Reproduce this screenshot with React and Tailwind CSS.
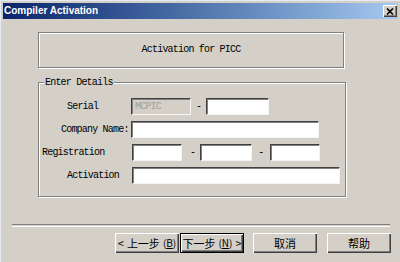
import React from "react";

const monoBase = "font-['Liberation_Mono',monospace] text-[10px] leading-[12px] tracking-[-0.8px]";
const mono = `${monoBase} text-black`;

function Field({ w, disabled, value }) {
  return (
    <div
      className={`h-[17px] ${w} border border-t-[#404040] border-l-[#404040] border-r-[#f4f4f4] border-b-[#f4f4f4] shadow-[inset_1px_1px_0_#808080] flex items-center pl-[3px] ${
        disabled ? "bg-[#d4d0c8]" : "bg-white"
      }`}
    >
      {value && <span className={`${monoBase} text-[#a19f98]`}>{value}</span>}
    </div>
  );
}

function Dash({ className }) {
  return <span className={`${mono} ${className}`}>-</span>;
}

function WinButton({ children, isDefault }) {
  return (
    <button
      type="button"
      className={`h-[20px] w-[64px] flex items-center justify-center gap-[3px] bg-[#d4d0c8] font-['Noto_Sans_CJK_SC',sans-serif] text-[11px] leading-none text-black ${
        isDefault
          ? "border border-black shadow-[inset_1px_1px_0_#fff,inset_-1px_-1px_0_#404040,inset_-2px_-2px_0_#808080]"
          : "shadow-[inset_1px_1px_0_#fff,inset_-1px_-1px_0_#404040,inset_-2px_-2px_0_#808080]"
      }`}
    >
      {children}
    </button>
  );
}

function Row({ labelW, pad, label, children }) {
  return (
    <div className="flex items-center h-[17px]">
      <div className={`${labelW} ${pad} ${mono}`}>{label}</div>
      {children}
    </div>
  );
}

export default function App() {
  return (
    <div className="w-[400px] h-[262px] overflow-hidden bg-[#d4d0c8] border-l border-t border-[#e6ebf5] pt-[2px] px-[2px]">
      {/* title bar */}
      <div className="h-[16px] flex items-center justify-between bg-gradient-to-r from-[#0a246a] to-[#a6caf0]">
        <span className="pl-[1px] font-['Liberation_Sans',sans-serif] font-bold text-[10px] leading-none text-white">
          Compiler Activation
        </span>
        <div className="mr-[1px] w-[14px] h-[12px] bg-[#d4d0c8] flex items-center justify-center shadow-[inset_1px_1px_0_#fff,inset_-1px_-1px_0_#404040,inset_-2px_-2px_0_#808080]">
          <svg width="8" height="7" viewBox="0 0 8 7">
            <path d="M1 0.5 L7 6.5 M7 0.5 L1 6.5" stroke="#000" strokeWidth="1.6" />
          </svg>
        </div>
      </div>

      {/* header box */}
      <div className="mt-[13px] ml-[35px] w-[306px] h-[36px] border border-[#808080] shadow-[inset_1px_1px_0_#fff,1px_1px_0_#fff] flex items-center justify-center">
        <span className={mono}>Activation for PICC</span>
      </div>

      {/* details group */}
      <div className="relative mt-[14px] ml-[35px] w-[308px] h-[115px] border border-[#808080] shadow-[inset_1px_1px_0_#fff,1px_1px_0_#fff] pt-[15px] flex flex-col gap-[6px]">
        <span className={`${mono} absolute -top-[6px] left-[5px] bg-[#d4d0c8] px-[1px]`}>
          Enter Details
        </span>

        <Row labelW="w-[92px]" pad="pl-[28px]" label="Serial">
          <Field w="w-[60px]" disabled value="MCPIC" />
          <Dash className="ml-[5px] mr-[5px]" />
          <Field w="w-[63px]" />
        </Row>

        <Row labelW="w-[92px]" pad="pl-[22px]" label="Company Name:">
          <Field w="w-[188px]" />
        </Row>

        <Row labelW="w-[93px]" pad="pl-[3px]" label="Registration">
          <Field w="w-[50px]" />
          <Dash className="ml-[8px] mr-[5px]" />
          <Field w="w-[52px]" />
          <Dash className="ml-[6px] mr-[7px]" />
          <Field w="w-[50px]" />
        </Row>

        <Row labelW="w-[93px]" pad="pl-[28px]" label="Activation">
          <Field w="w-[208px]" />
        </Row>
      </div>

      {/* separator */}
      <div className="mt-[27px] ml-[9px] w-[378px] h-[2px] border-t border-[#808080] shadow-[0_1px_0_#fff]" />

      {/* buttons */}
      <div className="mt-[7px] ml-[112px] flex items-center">
        <WinButton>
          <span>&lt;</span>
          <span>上一步</span>
          <span className="text-[10px]">
            (<u>B</u>)
          </span>
        </WinButton>
        <div className="ml-[1px]">
          <WinButton isDefault>
            <span>下一步</span>
            <span className="text-[10px]">
              (<u>N</u>)
            </span>
            <span>&gt;</span>
          </WinButton>
        </div>
        <div className="ml-[9px]">
          <WinButton>取消</WinButton>
        </div>
        <div className="ml-[10px]">
          <WinButton>帮助</WinButton>
        </div>
      </div>
    </div>
  );
}
